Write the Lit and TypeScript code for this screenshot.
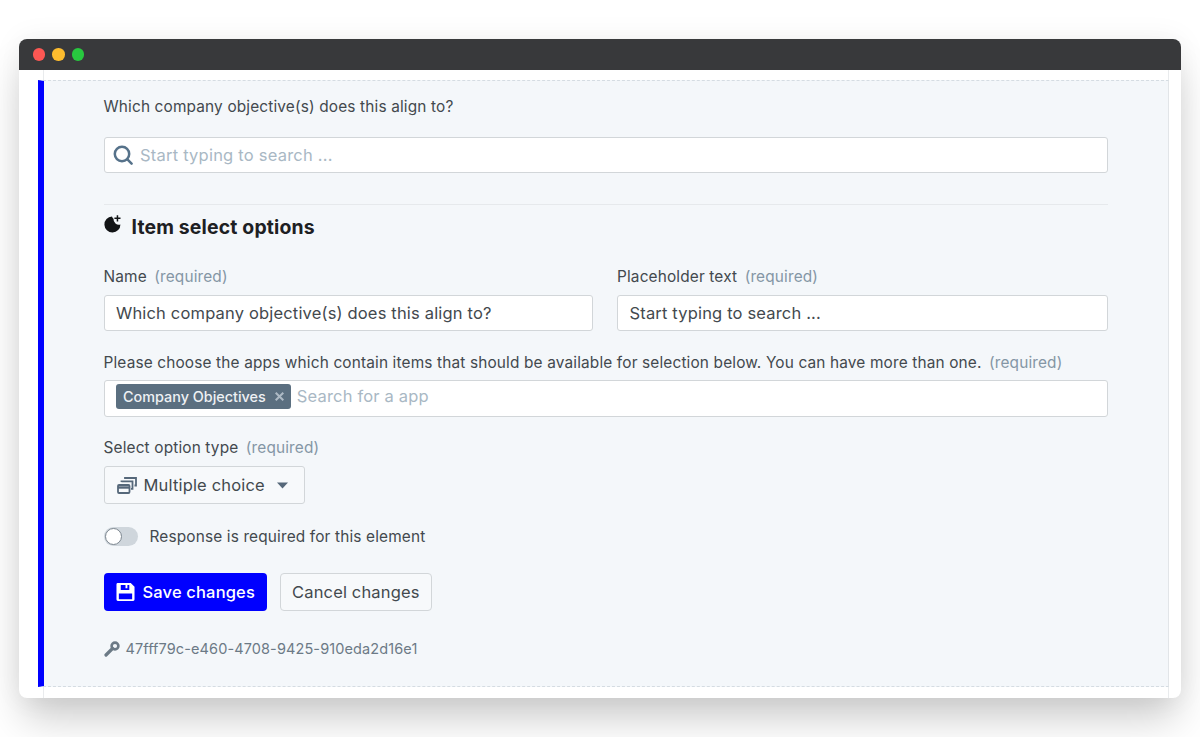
import { LitElement, css, html } from "lit";
import { customElement } from "lit/decorators.js";

@customElement("app-root")
export class AppRoot extends LitElement {
  static styles = css`
    :host {
      display: block;
      height: 737px;
      overflow: hidden;
      background: #fff;
      font-family: Inter, "Liberation Sans", sans-serif;
      color: #43494e;
    }
    * {
      box-sizing: border-box;
    }
    .stage {
      padding: 39px 19px 0;
    }
    .window {
      height: 659px;
      background: #fff;
      border-radius: 8px;
      box-shadow: 0 25px 40px -5px rgba(0, 0, 0, 0.2), 0 0 30px rgba(0, 0, 0, 0.06);
      display: flex;
      flex-direction: column;
    }
    .titlebar {
      height: 31px;
      flex: none;
      background: #38393b;
      border-radius: 8px 8px 0 0;
      display: flex;
      align-items: center;
      gap: 7px;
      padding-left: 13.5px;
    }
    .dot {
      width: 12.5px;
      height: 12.5px;
      border-radius: 50%;
    }
    .red { background: #fc5753; }
    .yellow { background: #fdbc2e; }
    .green { background: #28c93f; }
    .content {
      flex: 1;
      padding: 10px 12px 11px 19px;
      display: flex;
      /* faint rail lines that run past the panel up to the title bar */
      background:
        linear-gradient(#e9ebed, #e9ebed) 24px 0 / 1px 100% no-repeat,
        linear-gradient(#e9ebed, #e9ebed) 1149px 0 / 1px 100% no-repeat;
    }
    .panel {
      flex: 1;
      background: #f4f7fa;
      border-left: 6px solid #0000ff;
      border-top: 1px dashed #d5dce2;
      border-bottom: 1px dashed #d5dce2;
      border-right: 1px solid #e2e5e8;
      padding: 15px 60px 0 59.5px;
    }
    .label {
      font-size: 15.4px;
      line-height: 22px;
      margin-bottom: -2px;
      letter-spacing: 0.15px;
    }
    .req {
      color: #8496a5;
      margin-left: 3px;
    }
    .input {
      height: 36px;
      background: #fff;
      border: 1px solid #d2d6d9;
      border-radius: 3px;
      display: flex;
      align-items: center;
      font-size: 16.5px;
      letter-spacing: 0.17px;
      padding: 0 11.5px;
      white-space: nowrap;
    }
    .search {
      margin-top: 21px;
      padding: 0 8px;
      gap: 7.5px;
      letter-spacing: 0.22px;
      color: #a9b8c4;
    }
    .rule {
      height: 1px;
      background: #e6e9ec;
      margin-top: 31px;
    }
    .section {
      display: flex;
      align-items: center;
      gap: 11px;
      margin-top: 8px;
      height: 28px;
    }
    .section svg {
      margin-top: -6px;
    }
    .section h2 {
      margin: 0;
      font-size: 19.4px;
      font-weight: 700;
      letter-spacing: 0.17px;
      color: #1d2023;
    }
    .cols {
      display: grid;
      grid-template-columns: 489.5px 1fr;
      gap: 24px;
      margin-top: 25px;
    }
    .col {
      min-width: 0;
    }
    .col .input {
      margin-top: 9px;
    }
    .apps-label {
      margin-top: 21px;
    }
    .apps {
      height: 37px;
      margin-top: 8px;
      padding: 3px 12px 0 11.5px;
      gap: 6px;
      align-items: flex-start;
      color: #a9b8c4;
    }
    .apps span.hint {
      line-height: 25px;
    }
    .tag {
      height: 25px;
      background: #5b6f80;
      border-radius: 3px;
      display: flex;
      align-items: center;
      gap: 9px;
      padding: 0 7px;
      color: #eef1f4;
      font-size: 14.4px;
      font-weight: 500;
      letter-spacing: 0;
    }
    .option-label {
      margin-top: 20px;
    }
    .select {
      display: inline-flex;
      align-items: center;
      width: 201px;
      height: 38px;
      margin-top: 9px;
      padding: 0 12px;
      gap: 7px;
      background: #f7f9fb;
      border: 1px solid #d2d6d9;
      border-radius: 3px;
      font-size: 16.5px;
      letter-spacing: 0.17px;
    }
    .caret {
      margin-left: 4px;
    }
    .toggle-row {
      display: flex;
      align-items: center;
      gap: 12px;
      margin-top: 22px;
      height: 20px;
    }
    .toggle-row .label {
      margin-bottom: 0;
      padding-top: 1px;
    }
    .toggle {
      width: 34px;
      height: 19px;
      border-radius: 10px;
      background: #cfd6dc;
      padding: 1px;
    }
    .knob {
      width: 17px;
      height: 17px;
      border-radius: 50%;
      background: #fff;
      border: 1px solid #7d8790;
    }
    .actions {
      display: flex;
      gap: 13px;
      margin-top: 27px;
    }
    .btn {
      height: 38px;
      border-radius: 4px;
      display: flex;
      align-items: center;
      font-size: 16.5px;
      letter-spacing: 0.16px;
      white-space: nowrap;
    }
    .primary {
      width: 163.5px;
      padding: 0 12px;
      background: #0000ff;
      color: #fff;
      gap: 8px;
      font-weight: 500;
    }
    .secondary {
      width: 152px;
      padding: 0 11px;
      background: #f7f9fb;
      border: 1px solid #d2d6d9;
    }
    .uuid {
      display: flex;
      align-items: center;
      gap: 6px;
      margin-top: 28px;
      font-size: 14.5px;
      line-height: 20px;
      letter-spacing: 0.11px;
      color: #6c7a86;
    }
  `;

  render() {
    return html`
      <div class="stage">
        <div class="window">
          <div class="titlebar">
            <span class="dot red"></span>
            <span class="dot yellow"></span>
            <span class="dot green"></span>
          </div>
          <div class="content">
            <div class="panel">
              <div class="label">Which company objective(s) does this align to?</div>
              <div class="input search">
                <svg width="20" height="20" viewBox="0 0 20 20" fill="none" stroke="#56728a" stroke-width="2.5" stroke-linecap="round">
                  <circle cx="9" cy="9" r="7.2"></circle>
                  <path d="M14.4 14.4 18.6 18.600"></path>
                </svg>
                Start typing to search ...
              </div>
              <div class="rule"></div>
              <div class="section">
                <svg width="17" height="18" viewBox="0 0 17 18" fill="#121416">
                  <path d="M8 1.500A8 8 0 1 0 16.400 9.400 5.400 5.400 0 0 1 9.500 3.800 4 4 0 0 1 8 1.500Z"></path>
                  <path d="M12.700 0.300h1.500v2.300h2.300v1.500h-2.300v2.300h-1.500V4.100h-2.300V2.600h2.300Z"></path>
                </svg>
                <h2>Item select options</h2>
              </div>
              <div class="cols">
                <div class="col">
                  <div class="label">Name <span class="req">(required)</span></div>
                  <div class="input">Which company objective(s) does this align to?</div>
                </div>
                <div class="col">
                  <div class="label">Placeholder text <span class="req">(required)</span></div>
                  <div class="input">Start typing to search ...</div>
                </div>
              </div>
              <div class="label apps-label">
                Please choose the apps which contain items that should be available for selection below. You can have more than one.
                <span class="req">(required)</span>
              </div>
              <div class="input apps">
                <span class="tag">
                  Company Objectives
                  <svg width="9" height="9" viewBox="0 0 9 9" stroke="#aebac5" stroke-width="2">
                    <path d="M0.700 0.700 8.300 8.300M8.300 0.700 0.700 8.300"></path>
                  </svg>
                </span>
                <span class="hint">Search for a app</span>
              </div>
              <div class="label option-label">Select option type <span class="req">(required)</span></div>
              <div class="select">
                <svg width="20" height="17" viewBox="0 0 20 17" fill="none" stroke="#56687a" stroke-width="1.800">
                  <rect x="1" y="8" width="11.500" height="8" rx="1"></rect>
                  <path d="M1 10.500h11.500" stroke-width="2.400"></path>
                  <path d="M4.500 5V4.300h11v7.500h-1.500"></path>
                  <path d="M8 2V1h11v7.500h-1.500"></path>
                </svg>
                Multiple choice
                <svg class="caret" width="13" height="7" viewBox="0 0 13 7" fill="#56687a">
                  <path d="M1 0.500h11L6.500 6.500Z"></path>
                </svg>
              </div>
              <div class="toggle-row">
                <div class="toggle"><div class="knob"></div></div>
                <div class="label">Response is required for this element</div>
              </div>
              <div class="actions">
                <div class="btn primary">
                  <svg width="20" height="20" viewBox="0 0 20 20" fill="#fff">
                    <path fill-rule="evenodd" d="M1.500 0.500H15.500L19.500 4.500V18a1.500 1.500 0 0 1-1.500 1.500H2A1.500 1.500 0 0 1 0.500 18V2A1.500 1.500 0 0 1 1.500 0.500ZM5 2.500V8H14V2.500H12V6H10V2.500ZM3 11.500V17.500H17V11.500Z"></path>
                  </svg>
                  Save changes
                </div>
                <div class="btn secondary">Cancel changes</div>
              </div>
              <div class="uuid">
                <svg width="16" height="16" viewBox="0 0 16 16" fill="none" stroke="#6c7a86">
                  <circle cx="11" cy="5" r="3.400" stroke-width="2.600"></circle>
                  <path d="M8.500 7.500 2 14" stroke-width="3.200" stroke-linecap="round"></path>
                </svg>
                47fff79c-e460-4708-9425-910eda2d16e1
              </div>
            </div>
          </div>
        </div>
      </div>
    `;
  }
}
